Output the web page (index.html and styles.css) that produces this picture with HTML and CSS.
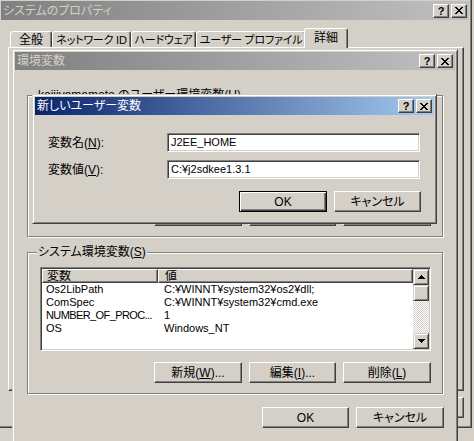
FILE: index.html
```html
<!DOCTYPE html>
<html lang="ja">
<head>
<meta charset="utf-8">
<title>環境変数</title>
<link rel="stylesheet" href="styles.css">
</head>
<body>
<main class="desktop">

  <section class="win win-sys">
    <header class="titlebar inactive">
      <span class="title-text">システムのプロパティ</span>
      <span class="caption-btns">
        <span class="cap-btn">?</span>
        <span class="cap-btn"><svg class="x-glyph" width="8" height="7" viewBox="0 0 8 7"><path d="M0 0h2v1H0zM6 0h2v1H6zM1 1h2v1H1zM5 1h2v1H5zM2 2h4v1H2zM3 3h2v1H3zM2 4h4v1H2zM1 5h2v1H1zM5 5h2v1H5zM0 6h2v1H0zM6 6h2v1H6z"/></svg></span>
      </span>
    </header>
    <div class="sys-body">
      <nav class="tabs">
        <span class="tab tab-general">全般</span>
        <span class="tab tab-network">ネットワーク ID</span>
        <span class="tab tab-hardware">ハードウェア</span>
        <span class="tab tab-profile">ユーザー プロファイル</span>
        <span class="tab tab-advanced selected">詳細</span>
      </nav>
      <div class="tabpanel"></div>
      <div class="btn-row sys-btns">
        <span class="btn"></span>
        <span class="btn"></span>
        <span class="btn"></span>
      </div>
    </div>
  </section>

  <section class="win win-env">
    <header class="titlebar inactive">
      <span class="title-text">環境変数</span>
      <span class="caption-btns">
        <span class="cap-btn">?</span>
        <span class="cap-btn"><svg class="x-glyph" width="8" height="7" viewBox="0 0 8 7"><path d="M0 0h2v1H0zM6 0h2v1H6zM1 1h2v1H1zM5 1h2v1H5zM2 2h4v1H2zM3 3h2v1H3zM2 4h4v1H2zM1 5h2v1H1zM5 5h2v1H5zM0 6h2v1H0zM6 6h2v1H6z"/></svg></span>
      </span>
    </header>
    <div class="env-body">
      <div class="group group-user">
        <span class="group-label">kojiiyamamoto のユーザー環境変数(<u>U</u>)</span>
        <div class="lv">
          <div class="lv-main">
            <div class="lv-head"><span class="th c1">変数</span><span class="th c2">値</span></div>
          </div>
        </div>
        <div class="btn-row">
          <span class="btn wide"></span>
          <span class="btn"></span>
          <span class="btn wide"></span>
        </div>
      </div>

      <div class="group group-sys">
        <span class="group-label">システム環境変数(<u>S</u>)</span>
        <div class="lv">
          <div class="lv-main">
            <div class="lv-head"><span class="th c1">変数</span><span class="th c2">値</span></div>
            <div class="lv-row"><span class="c1">Os2LibPath</span><span class="c2">C:¥WINNT¥system32¥os2¥dll;</span></div>
            <div class="lv-row"><span class="c1">ComSpec</span><span class="c2">C:¥WINNT¥system32¥cmd.exe</span></div>
            <div class="lv-row"><span class="c1 tight">NUMBER_OF_PROC...</span><span class="c2">1</span></div>
            <div class="lv-row"><span class="c1">OS</span><span class="c2">Windows_NT</span></div>
          </div>
          <div class="sb">
            <span class="sb-btn"><svg width="7" height="4" viewBox="0 0 7 4"><path d="M3 0h1v1H3zM2 1h3v1H2zM1 2h5v1H1zM0 3h7v1H0z"/></svg></span>
            <span class="sb-thumb"></span>
            <span class="sb-track"></span>
            <span class="sb-btn"><svg width="7" height="4" viewBox="0 0 7 4"><path d="M0 0h7v1H0zM1 1h5v1H1zM2 2h3v1H2zM3 3h1v1H3z"/></svg></span>
          </div>
        </div>
        <div class="btn-row">
          <button class="btn wide">新規(<u>W</u>)...</button>
          <button class="btn">編集(<u>I</u>)...</button>
          <button class="btn wide">削除(<u>L</u>)</button>
        </div>
      </div>

      <div class="btn-row env-btns">
        <button class="btn">OK</button>
        <button class="btn wide">キャンセル</button>
      </div>
    </div>
  </section>

  <section class="win win-new">
    <header class="titlebar active">
      <span class="title-text">新しいユーザー変数</span>
      <span class="caption-btns">
        <span class="cap-btn">?</span>
        <span class="cap-btn"><svg class="x-glyph" width="8" height="7" viewBox="0 0 8 7"><path d="M0 0h2v1H0zM6 0h2v1H6zM1 1h2v1H1zM5 1h2v1H5zM2 2h4v1H2zM3 3h2v1H3zM2 4h4v1H2zM1 5h2v1H1zM5 5h2v1H5zM0 6h2v1H0zM6 6h2v1H6z"/></svg></span>
      </span>
    </header>
    <div class="new-body">
      <div class="frow">
        <span class="flabel">変数名(<u>N</u>):</span>
        <span class="field">J2EE_HOME</span>
      </div>
      <div class="frow">
        <span class="flabel">変数値(<u>V</u>):</span>
        <span class="field">C:¥j2sdkee1.3.1</span>
      </div>
      <div class="btn-row new-btns">
        <button class="btn wide default">OK</button>
        <button class="btn">キャンセル</button>
      </div>
    </div>
  </section>

</main>
</body>
</html>
```

FILE: styles.css
```css
* { box-sizing: border-box; margin: 0; padding: 0; }

html, body { width: 474px; height: 441px; overflow: hidden; }

body {
  background: #d4d0c8;
  font-family: "Liberation Sans", "Noto Sans CJK JP", sans-serif;
  font-size: 12px;
  line-height: 14px;
  color: #000;
  font-feature-settings: "palt" 1;
}

.desktop {
  position: relative;
  display: block;
  width: 474px;
  height: 441px;
  overflow: hidden;
}

/* ---------- windows ---------- */
.win {
  position: absolute;
  display: flex;
  flex-direction: column;
  background: #d4d0c8;
  border: 1px solid;
  border-color: #d4d0c8 #404040 #404040 #d4d0c8;
  box-shadow: inset 1px 1px #fff, inset -1px -1px #808080;
  padding: 2px;
}

.win-sys { left: -2px; top: -2px; width: 474px; height: 430px; }
.win-env { left: 12px; top: 49px; width: 446px; height: 394px; }
.win-new { left: 32px; top: 94px; width: 405px; height: 130px; }

.titlebar {
  flex: none;
  display: flex;
  align-items: center;
  height: 18px;
  padding: 0 2px 0 2px;
}

.win-sys .titlebar { height: 19px; }

.titlebar.inactive {
  background: linear-gradient(to right, #808080, #c0c0c0);
  color: #d4d0c8;
}

.titlebar.active {
  background: linear-gradient(to right, #0a246a, #a6caf0);
  color: #fff;
}

.title-text {
  flex: 1;
  white-space: nowrap;
  line-height: 16px;
}

.caption-btns { display: flex; gap: 2px; }

.cap-btn {
  width: 16px;
  height: 14px;
  display: flex;
  align-items: center;
  justify-content: center;
  background: #d4d0c8;
  color: #000;
  border: 1px solid;
  border-color: #fff #404040 #404040 #fff;
  box-shadow: inset -1px -1px #808080;
  font: bold 11px/12px "Liberation Sans", sans-serif;
}

.x-glyph { display: block; shape-rendering: crispEdges; }

/* ---------- system properties ---------- */
.sys-body {
  display: flex;
  flex-direction: column;
  padding: 8px 5px 0 7px;
}

.tabs {
  display: flex;
  align-items: flex-end;
  height: 19px;
  padding-left: 2px;
  position: relative;
  z-index: 1;
  font-size: 11px;
}

.tab {
  flex: none;
  height: 16px;
  text-align: center;
  white-space: nowrap;
  border: 1px solid;
  border-bottom: none;
  border-color: #fff #404040 transparent #fff;
  box-shadow: inset -1px 0 #808080;
  border-radius: 3px 3px 0 0;
  padding-top: 1px;
  background: #d4d0c8;
  letter-spacing: -0.2px;
}

.tab-general { width: 42px; font-size: 12px; letter-spacing: 0; }
.tab-network { width: 79px; }
.tab-hardware { width: 65px; }
.tab-profile { width: 110px; }
.tab-advanced { width: 40px; }

.tab.selected {
  width: 44px;
  height: 20px;
  margin: 0 -2px -1px -2px;
  padding-top: 2px;
  font-size: 12px;
  letter-spacing: 0;
}

.tabpanel {
  height: 344px;
  border: 1px solid;
  border-color: #fff #404040 #404040 #fff;
  box-shadow: inset -1px -1px #808080;
}

/* ---------- buttons ---------- */
.btn-row {
  display: flex;
  justify-content: flex-end;
  gap: 7px;
  flex: none;
}

.sys-btns { margin-top: 6px; gap: 6px; }

.btn {
  flex: none;
  width: 87px;
  height: 21px;
  font: inherit;
  color: #000;
  background: #d4d0c8;
  border: 1px solid;
  border-color: #fff #404040 #404040 #fff;
  box-shadow: inset -1px -1px #808080;
  display: flex;
  align-items: center;
  justify-content: center;
  padding: 0;
  line-height: 14px;
  white-space: nowrap;
}

.btn.wide { width: 88px; }

.btn.default {
  border-color: #000;
  box-shadow: inset 1px 1px #fff, inset -1px -1px #404040, inset -2px -2px #808080;
}

u { text-underline-offset: 1px; }

/* ---------- environment variables ---------- */
.env-body {
  display: flex;
  flex-direction: column;
  padding: 0 12px;
}

.group {
  position: relative;
  flex: none;
  height: 142px;
  border: 1px solid #808080;
  box-shadow: 1px 1px #fff, inset 1px 1px #fff;
  padding: 14px 11px 10px 12px;
  display: flex;
  flex-direction: column;
  gap: 11px;
}

.group-user { margin-top: 25px; }
.group-sys { margin-top: 15px; }

.group-label {
  position: absolute;
  left: 9px;
  top: -8px;
  padding: 0 1px;
  background: #d4d0c8;
  white-space: nowrap;
  line-height: 14px;
}

.env-btns { margin-top: 13px; margin-right: -1px; }

.lv {
  flex: none;
  height: 84px;
  display: flex;
  background: #fff;
  border: 1px solid;
  border-color: #808080 #fff #fff #808080;
  box-shadow: inset 1px 1px #404040, inset -1px -1px #d4d0c8;
  padding: 1px;
}

.lv-main {
  flex: 1;
  min-width: 0;
  display: flex;
  flex-direction: column;
}

.lv-head { display: flex; height: 14px; flex: none; }

.th {
  background: #d4d0c8;
  border: 1px solid;
  border-color: #fff #404040 #404040 #fff;
  box-shadow: inset -1px -1px #808080;
  padding-left: 4px;
  line-height: 12px;
  white-space: nowrap;
  overflow: hidden;
}

.th.c1 { width: 116px; flex: none; }
.th.c2 { flex: 1; padding-left: 6px; }

.lv-row {
  display: flex;
  height: 13px;
  line-height: 13px;
  font-size: 11px;
  white-space: nowrap;
}

.lv-row .c1 { width: 116px; flex: none; padding-left: 4px; }
.lv-row .c1.tight { letter-spacing: -0.6px; }
.lv-row .c2 { padding-left: 6px; }

.sb {
  width: 16px;
  flex: none;
  display: flex;
  flex-direction: column;
}

.sb-btn, .sb-thumb {
  flex: none;
  height: 16px;
  background: #d4d0c8;
  border: 1px solid;
  border-color: #d4d0c8 #404040 #404040 #d4d0c8;
  box-shadow: inset 1px 1px #fff, inset -1px -1px #808080;
  display: flex;
  align-items: center;
  justify-content: center;
}

.sb-btn svg { display: block; shape-rendering: crispEdges; }

.sb-track {
  flex: 1;
  background: repeating-conic-gradient(#fff 0 25%, #d4d0c8 0 50%) 0 0 / 2px 2px;
}

/* ---------- new user variable ---------- */
.new-body {
  display: flex;
  flex-direction: column;
  padding: 18px 14px 0 13px;
}

.frow {
  display: flex;
  align-items: center;
  height: 19px;
}

.frow + .frow { margin-top: 8px; }

.flabel { width: 119px; flex: none; white-space: nowrap; }

.field {
  flex: 1;
  height: 19px;
  background: #fff;
  border: 1px solid;
  border-color: #808080 #fff #fff #808080;
  box-shadow: inset 1px 1px #404040, inset -1px -1px #d4d0c8;
  padding: 0 3px;
  font-size: 11px;
  line-height: 17px;
  white-space: nowrap;
}

.new-btns { margin-top: 12px; margin-right: -1px; }
```
